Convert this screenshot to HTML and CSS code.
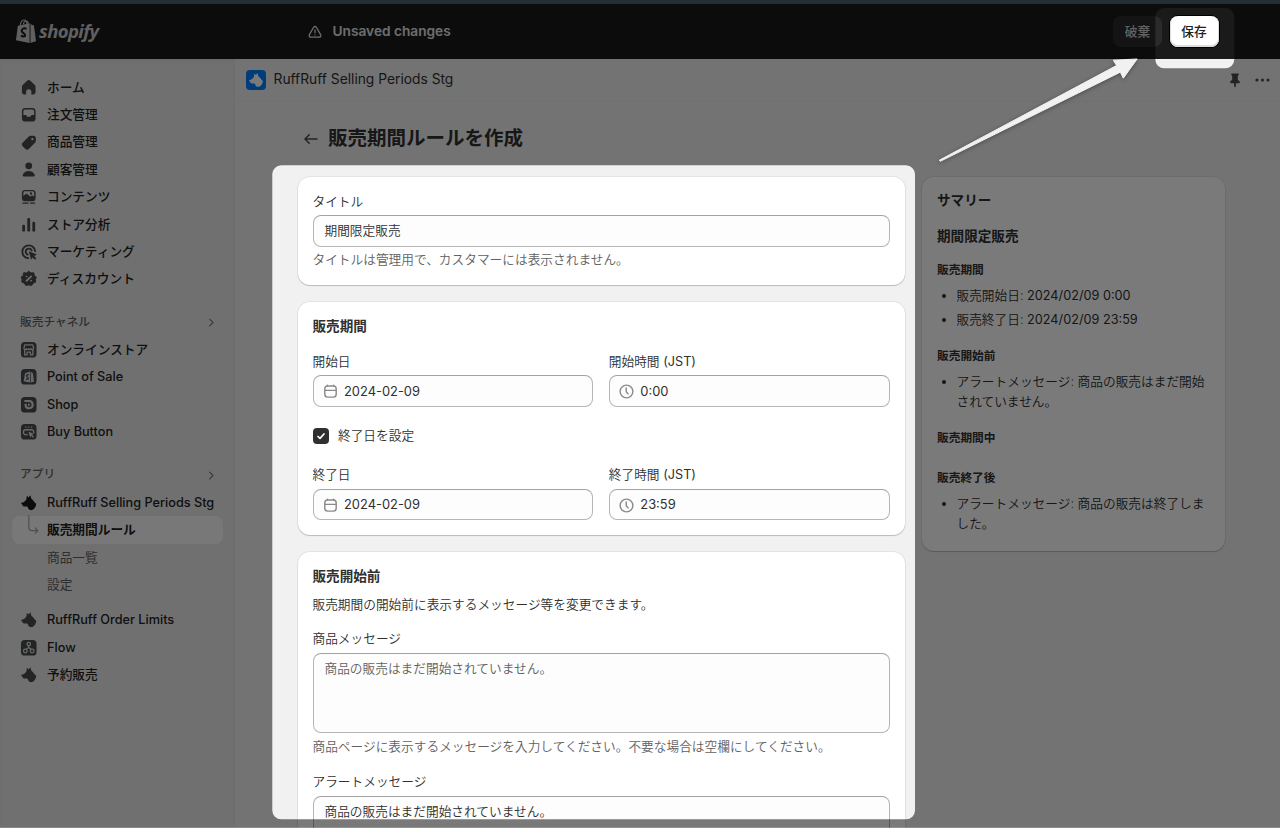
FILE: index.html
```html
<!DOCTYPE html>
<html lang="ja">
<head>
    <meta charset="UTF-8">
    <meta name="viewport" content="width=device-width, initial-scale=1.0">
    <title>販売期間ルールを作成</title>
    <link rel="stylesheet" href="styles.css">
</head>
<body>
    <!-- Shared icons -->
    <svg class="sprite">
        <symbol id="dog" viewBox="0 0 20 20">
            <path d="M7.600 6.300 8.100 2.700 9.800 4.500 11.700 2.300 12.700 5.800C14.600 7 15.300 9 17.700 11.100 17.500 14 16 16.300 13.700 17.400 11.700 17.900 9.800 17.300 9.400 15.700 9.200 14.300 8.600 13.700 7.200 13.800 5.300 14 3.900 13.600 3.500 12.500L3.700 12 2.300 11.300 2.500 10C4.600 9.600 6.300 8.700 7.600 6.300Z"/>
        </symbol>
        <symbol id="chevron" viewBox="0 0 20 20">
            <path d="m7.500 5.500 4.500 4.500-4.500 4.500" fill="none" stroke="currentColor" stroke-width="1.500" stroke-linecap="round" stroke-linejoin="round"/>
        </symbol>
        <symbol id="calendar" viewBox="0 0 20 20">
            <g fill="none" stroke="currentColor" stroke-width="1.500" stroke-linecap="round">
                <rect x="4" y="4.200" width="12" height="11.700" rx="3"/>
                <path d="M4 8.800h12M6.700 3.300v.8M13.300 3.300v.8"/>
            </g>
        </symbol>
        <symbol id="clock" viewBox="0 0 20 20">
            <g fill="none" stroke="currentColor" stroke-width="1.500" stroke-linecap="round" stroke-linejoin="round">
                <circle cx="10" cy="10" r="6.700"/>
                <path d="M9.700 6.300v3.900l2 2.300"/>
            </g>
        </symbol>
        <symbol id="bag" viewBox="0 0 22 25">
            <path d="M5.600 6.200C6 3 8 1 10 1c1.500 0 2.300 1.500 2.600 4.500M8.700 5.600C9 3.500 10.500 2 11.700 2c1.200-.1 2 1.200 2.400 2.900" fill="none" stroke="currentColor" stroke-width="1.200"/>
            <path d="M3 7l12.300-2.500V25L1 22.300z" fill="currentColor"/>
            <path d="M16.200 4.700l1.600 1.500 2 .3L22 23.300 16.200 25z" fill="currentColor"/>
            <path class="bag-s" d="M12 10.300c-2.500-1.300-5-.2-5 1.900 0 2.500 3.600 2.500 3.600 4.700 0 1.800-2.400 1.700-4.400.4" fill="none" stroke-width="2.100"/>
        </symbol>
    </svg>

    <div class="browser-edge"></div>
    <header class="topbar">
        <div class="logo">
            <svg class="logo-bag"><use href="#bag"/></svg>
            <span class="logo-text">shopify</span>
        </div>
        <div class="save-bar">
            <svg class="warning" viewBox="0 0 20 20" fill="none" stroke="currentColor" stroke-width="1.600" stroke-linecap="round" stroke-linejoin="round">
                <path d="M8.300 4.100 3 13.300c-.8 1.500 0 3.200 1.800 3.200h10.400c1.800 0 2.600-1.700 1.800-3.200L11.700 4.100c-.8-1.300-2.600-1.300-3.400 0Z"/>
                <path d="M10 7.500v3.300M10 13.600v.1"/>
            </svg>
            <span>Unsaved changes</span>
        </div>
        <button class="btn btn-discard">破棄</button>
        <button class="btn btn-save">保存</button>
    </header>

    <div class="layout">
        <nav class="sidebar">
            <ul class="nav-list">
                <li class="nav-item">
                    <svg class="icon" viewBox="0 0 20 20"><path d="M8.300 2.900a2.500 2.500 0 0 1 3.400 0l4.300 3.900c.6.500 1 1.300 1 2.200v5.300c0 1.500-1 2.500-2.400 2.500h-1.900v-2.600a2.700 2.700 0 0 0-5.400 0v2.600H5.400C4 16.800 3 15.800 3 14.300V9c0-.9.4-1.700 1-2.200z"/></svg>
                    ホーム
                </li>
                <li class="nav-item">
                    <svg class="icon" viewBox="0 0 20 20"><path fill-rule="evenodd" d="M6.500 3h7A3.500 3.500 0 0 1 17 6.500v7a3.500 3.500 0 0 1-3.500 3.500h-7A3.500 3.500 0 0 1 3 13.500v-7A3.500 3.500 0 0 1 6.500 3Zm0 1.500a2 2 0 0 0-2 2v3.700h2.300c.9 0 1.100 1.800 2.200 1.800h2c1.100 0 1.300-1.800 2.200-1.800h2.300V6.500a2 2 0 0 0-2-2z"/></svg>
                    注文管理
                </li>
                <li class="nav-item">
                    <svg class="icon" viewBox="0 0 20 20"><path fill-rule="evenodd" d="M10.300 3.400c.5-.5 1.100-.7 1.800-.7h2.700c1.500 0 2.500 1 2.500 2.500v2.700c0 .7-.2 1.300-.7 1.800l-6.500 6.700c-1 1-2.500 1-3.500 0l-2.900-2.900c-1-1-1-2.500 0-3.500zM13.700 5a1.200 1.200 0 1 0 0 2.400 1.200 1.200 0 0 0 0-2.400Z"/></svg>
                    商品管理
                </li>
                <li class="nav-item">
                    <svg class="icon" viewBox="0 0 20 20"><circle cx="10" cy="6" r="3.500"/><path d="M3.800 15.300c1-2.400 3.300-4 6.200-4s5.200 1.600 6.200 4c.3.800-.3 1.500-1 1.500H4.800c-.7 0-1.300-.7-1-1.500Z"/></svg>
                    顧客管理
                </li>
                <li class="nav-item">
                    <svg class="icon" viewBox="0 0 20 20"><path fill-rule="evenodd" d="M6 3h8a3 3 0 0 1 3 3v5.500a3 3 0 0 1-3 3H6a3 3 0 0 1-3-3V6a3 3 0 0 1 3-3Zm0 1.400A1.500 1.500 0 0 0 4.500 6v3.200l2.400-1.900c.5-.4 1-.4 1.500 0l3 2.500 1.400-.9c.5-.3 1-.3 1.400 0l1.300.9V6A1.500 1.500 0 0 0 14 4.400zM12.300 5.500a1.200 1.200 0 1 1 0 2.400 1.200 1.200 0 0 1 0-2.400Z"/><path d="M3.500 15.800h6.300v1.400H3.500zM11.300 15.800h5.200v1.400h-5.200z"/></svg>
                    コンテンツ
                </li>
                <li class="nav-item">
                    <svg class="icon" viewBox="0 0 20 20"><rect x="3.300" y="10" width="2.900" height="7" rx="1.200"/><rect x="8.500" y="3" width="2.900" height="14" rx="1.200"/><rect x="13.700" y="7" width="2.900" height="10" rx="1.200"/></svg>
                    ストア分析
                </li>
                <li class="nav-item">
                    <svg class="icon" viewBox="0 0 20 20"><path d="M9.500 16.600A6.600 6.600 0 1 1 16.600 9.500M8.800 12.900A3.200 3.200 0 1 1 13 8.700" fill="none" stroke="currentColor" stroke-width="1.900" stroke-linecap="round"/><path d="m10 9.500 8.500 3.400-3 1.500 2.400 2.400-1.500 1.500-2.500-2.500-1.400 2.500z"/></svg>
                    マーケティング
                </li>
                <li class="nav-item">
                    <svg class="icon" viewBox="0 0 20 20"><path d="M10 2.300 12.200 4 15.200 3.900 15.700 6.700 17.800 8.400 16.900 10.700 17.100 13.400 14.600 14.500 13 16.800 10 16.300 7 16.800 5.400 14.500 2.900 13.400 3.100 10.700 2.200 8.400 4.300 6.700 4.800 3.900 7.800 4Z" stroke="currentColor" stroke-linejoin="round"/><path d="m7.700 12.200 4.700-4.700M7.700 7.700h.1M12.300 12h.1" stroke="#ebebeb" stroke-width="1.700" stroke-linecap="round"/></svg>
                    ディスカウント
                </li>
            </ul>

            <div class="nav-heading">販売チャネル<svg class="chevron"><use href="#chevron"/></svg></div>
            <ul class="nav-list">
                <li class="nav-item">
                    <svg class="icon channel" viewBox="0 0 20 20"><rect x="2" y="2" width="16" height="16" rx="4"/><g fill="none" stroke="#dcdcdc" stroke-width="1.300"><path d="M6 5h8l1 3.300c0 2-2.500 2-2.500.2 0 1.800-2.500 1.800-2.500 0 0 1.800-2.500 1.800-2.500 0C7.500 10.300 5 10.300 5 8.300zM5.800 10v5.200h2.500v-2.700h3.400v2.700h2.500V10"/></g></svg>
                    オンラインストア
                </li>
                <li class="nav-item">
                    <svg class="icon channel" viewBox="0 0 20 20"><rect x="2" y="2" width="16" height="16" rx="4"/><path d="m6.200 6.300 5.200-1.800v11.300l-6.600-1.300zM12.100 4.800l2.200 1.500 1.100 8.700-3.300.8z" fill="#dcdcdc"/><path d="M10.200 8.200c-1.400-.7-2.500 0-2.500.9 0 1.300 1.900 1.300 1.900 2.600 0 1-1.300 1-2.400.3" fill="none" stroke="#4a4d50" stroke-width="1.200"/></svg>
                    Point of Sale
                </li>
                <li class="nav-item">
                    <svg class="icon channel" viewBox="0 0 20 20"><rect x="2" y="2" width="16" height="16" rx="4"/><path d="M5.500 6.200h5a3.700 3.700 0 1 1-3.700 4.700V9" fill="none" stroke="#dcdcdc" stroke-width="2.200"/><path d="M9.200 8.400v3.200l2.700-1.600z" fill="#dcdcdc"/></svg>
                    Shop
                </li>
                <li class="nav-item">
                    <svg class="icon channel" viewBox="0 0 20 20"><rect x="2" y="2" width="16" height="16" rx="4"/><path d="M9 13H7a2.500 2.500 0 0 1 0-5h6a2.500 2.500 0 0 1 2 3.500M6.500 5.300h1.200M9.400 5.300h1.200M12.300 5.300h1.200" fill="none" stroke="#dcdcdc" stroke-width="1.400"/><path d="m9.700 9.900 5.800 2.200-2.100 1 1.900 2-1 1-1.900-2-1 1.700z" fill="#dcdcdc"/></svg>
                    Buy Button
                </li>
            </ul>

            <div class="nav-heading">アプリ<svg class="chevron"><use href="#chevron"/></svg></div>
            <ul class="nav-list">
                <li class="nav-item"><svg class="icon dog-active"><use href="#dog"/></svg>RuffRuff Selling Periods Stg</li>
                <li class="nav-item selected">
                    <svg class="branch" viewBox="0 0 14 24" fill="none" stroke="currentColor" stroke-width="1.400" stroke-linecap="round" stroke-linejoin="round"><path d="M1 1v14c0 2.500 1 3.500 3.500 3.500H11M8.500 15.500l3 3-3 3"/></svg>
                    販売期間ルール
                </li>
                <li class="nav-item sub">商品一覧</li>
                <li class="nav-item sub">設定</li>
            </ul>
            <ul class="nav-list more-apps">
                <li class="nav-item"><svg class="icon channel"><use href="#dog"/></svg>RuffRuff Order Limits</li>
                <li class="nav-item">
                    <svg class="icon channel" viewBox="0 0 20 20"><rect x="2" y="2" width="16" height="16" rx="4"/><g fill="none" stroke="#dcdcdc" stroke-width="1.300"><circle cx="10" cy="6.200" r="1.800"/><circle cx="6.500" cy="13.300" r="1.900"/><circle cx="13.500" cy="13.300" r="1.900"/><path d="M10 8v1.500c0 1.500-2.500.5-2.700 2.200M10 9.500c0 1.500 2 .8 2.400 2.200"/></g></svg>
                    Flow
                </li>
                <li class="nav-item"><svg class="icon channel"><use href="#dog"/></svg>予約販売</li>
            </ul>
        </nav>

        <main class="main">
            <div class="app-header">
                <span class="app-icon"><svg><use href="#dog"/></svg></span>
                <span class="app-name">RuffRuff Selling Periods Stg</span>
                <svg class="pin" viewBox="0 0 12 16"><path d="M3 .5h6c.8 0 1 .5 1 1.200 0 .8-.6 1.100-1 1.500v4l1.800 1.600c.6.600.5 2-.5 2H7v3l-1 1.700-1-1.700v-3H1.700c-1 0-1.100-1.400-.5-2L3 7.200v-4c-.4-.4-1-.7-1-1.500C2 1 2.200.5 3 .5Z"/></svg>
                <svg class="dots" viewBox="0 0 16 4"><circle cx="2" cy="2" r="1.600"/><circle cx="7.700" cy="2" r="1.600"/><circle cx="13.400" cy="2" r="1.600"/></svg>
            </div>

            <div class="page">
                <div class="page-title">
                    <svg class="back" viewBox="0 0 14 12" fill="none" stroke="currentColor" stroke-width="1.500" stroke-linecap="round" stroke-linejoin="round"><path d="M13 6H1.200M5.200 1.800 1 6l4.200 4.200"/></svg>
                    <h1>販売期間ルールを作成</h1>
                </div>

                <div class="columns">
                    <div class="form">
                        <section class="card">
                            <label class="label">タイトル</label>
                            <div class="input">期間限定販売</div>
                            <p class="help">タイトルは管理用で、カスタマーには表示されません。</p>
                        </section>

                        <section class="card">
                            <h2>販売期間</h2>
                            <div class="field-row">
                                <div class="field">
                                    <label class="label">開始日</label>
                                    <div class="input with-icon"><svg><use href="#calendar"/></svg>2024-02-09</div>
                                </div>
                                <div class="field">
                                    <label class="label">開始時間 <span class="zone">(JST)</span></label>
                                    <div class="input with-icon"><svg><use href="#clock"/></svg>0:00</div>
                                </div>
                            </div>
                            <div class="check-row">
                                <span class="checkbox">
                                    <svg viewBox="0 0 16 16" fill="none" stroke="#fff" stroke-width="1.700" stroke-linecap="round" stroke-linejoin="round"><path d="m5 8.500 2 1.900L11 6"/></svg>
                                </span>
                                終了日を設定
                            </div>
                            <div class="field-row">
                                <div class="field">
                                    <label class="label">終了日</label>
                                    <div class="input with-icon"><svg><use href="#calendar"/></svg>2024-02-09</div>
                                </div>
                                <div class="field">
                                    <label class="label">終了時間 <span class="zone">(JST)</span></label>
                                    <div class="input with-icon"><svg><use href="#clock"/></svg>23:59</div>
                                </div>
                            </div>
                        </section>

                        <section class="card">
                            <h2>販売開始前</h2>
                            <p class="lead">販売期間の開始前に表示するメッセージ等を変更できます。</p>
                            <label class="label">商品メッセージ</label>
                            <div class="input textarea placeholder">商品の販売はまだ開始されていません。</div>
                            <p class="help">商品ページに表示するメッセージを入力してください。不要な場合は空欄にしてください。</p>
                            <label class="label next-label">アラートメッセージ</label>
                            <div class="input textarea">商品の販売はまだ開始されていません。</div>
                        </section>
                    </div>

                    <aside class="card summary">
                        <h2>サマリー</h2>
                        <h2>期間限定販売</h2>
                        <h3>販売期間</h3>
                        <ul>
                            <li>販売開始日: <span class="date">2024/02/09 0:00</span></li>
                            <li>販売終了日: <span class="date">2024/02/09 23:59</span></li>
                        </ul>
                        <h3>販売開始前</h3>
                        <ul>
                            <li>アラートメッセージ: 商品の販売はまだ開始されていません。</li>
                        </ul>
                        <h3>販売期間中</h3>
                        <ul class="empty"></ul>
                        <h3>販売終了後</h3>
                        <ul>
                            <li>アラートメッセージ: 商品の販売は終了しました。</li>
                        </ul>
                    </aside>
                </div>
            </div>
        </main>
    </div>

    <!-- Dim layer with two spotlights and the pointer arrow -->
    <svg class="overlay" viewBox="0 0 1280 828">
        <mask id="spotlight">
            <rect width="1280" height="828" fill="#fff"/>
            <rect x="272.300" y="165.300" width="642.700" height="654" rx="9" fill="#000"/>
            <rect x="1155.300" y="8" width="79" height="60.300" rx="9" fill="#000"/>
        </mask>
        <rect width="1280" height="827" fill="#000" fill-opacity=".52" mask="url(#spotlight)"/>
        <rect y="827" width="1280" height="1" fill="#000" fill-opacity=".42"/>
        <path class="arrow" d="M939.300 160.200 1116.500 65.500 1113.300 60.200 1137.200 59 1123.300 78.200 1120.300 72.200 940.300 161.300Z"/>
    </svg>
</body>
</html>
```
FILE: styles.css
```css
:root {
    --bg: #f1f1f1;
    --sidebar: #ebebeb;
    --topbar: #1a1a1a;
    --text: #303030;
    --text-secondary: #616161;
    --cjk: "Noto Sans CJK JP";
}

* {
    margin: 0;
    padding: 0;
    box-sizing: border-box;
}

body {
    height: 828px;
    overflow: hidden;
    font-family: Inter, var(--cjk), sans-serif;
    font-size: 12.7px;
    line-height: 19.6px;
    color: var(--text);
    background: var(--bg);
}

ul {
    list-style: none;
}

.sprite {
    display: none;
}

/* Top bar */
.browser-edge {
    height: 4px;
    background: #49636f;
}

.topbar {
    display: flex;
    align-items: center;
    height: 54.5px;
    padding: 0 61.5px 0 15px;
    background: var(--topbar);
    color: #e3e3e3;
}

.logo {
    display: flex;
    align-items: center;
    gap: 3px;
    width: 292px;
}

.logo-bag {
    width: 21px;
    height: 24px;
    color: #c8c8c8;
}

.bag-s {
    stroke: var(--topbar);
}

.logo-text {
    font-family: "Open Sans", sans-serif;
    font-size: 18.5px;
    font-weight: 700;
    font-style: italic;
    letter-spacing: -0.6px;
    color: #c8c8c8;
}

.save-bar {
    display: flex;
    align-items: center;
    gap: 9.5px;
    flex: 1;
    padding-top: 1px;
    font-size: 13.7px;
    font-weight: 600;
}

.warning {
    width: 16px;
    height: 16px;
}

.btn {
    height: 31px;
    padding-bottom: 2.5px;
    border: 0;
    border-radius: 8px;
    font-family: inherit;
    font-size: 12.7px;
    font-weight: 500;
}

.btn-discard {
    width: 49px;
    margin-right: 7.5px;
    background: #2b2b2b;
    color: #d0d0d0;
}

.btn-save {
    width: 49px;
    background: #fff;
    color: #202020;
    box-shadow: 0 0 0 1px #000, inset 0 -1px 0 1px #ddd;
}

.layout {
    display: flex;
    height: 769.5px;
    overflow: hidden;
}

/* Sidebar */
.sidebar {
    width: 235px;
    padding: 15.3px 12px 0;
    background: var(--sidebar);
    box-shadow: inset 0 2px 3px rgb(0 0 0 / 0.06);
}

.nav-item {
    display: flex;
    align-items: center;
    gap: 8.5px;
    height: 27.4px;
    padding-left: 7px;
    border-radius: 8px;
    font-weight: 500;
    white-space: nowrap;
    color: #222;
}

.icon {
    flex: none;
    width: 19.5px;
    height: 19.5px;
    fill: #4a4a4a;
    color: #4a4a4a;
}

.channel {
    fill: #4a4d50;
}

.dog-active {
    fill: #1a1a1a;
}

.nav-heading {
    display: flex;
    align-items: center;
    justify-content: space-between;
    height: 27.4px;
    margin-top: 15.8px;
    padding: 0 4px 0 8px;
    font-size: 11.7px;
    font-weight: 500;
    color: var(--text-secondary);
}

.chevron {
    width: 15px;
    height: 15px;
    color: #7a7a7a;
}

.nav-item.selected {
    gap: 7px;
    padding-left: 16px;
    background: #fafafa;
    font-weight: 600;
}

.branch {
    width: 12px;
    height: 22px;
    margin-top: -10px;
    color: #a5a5a5;
}

.nav-item.sub {
    padding-left: 35px;
    font-weight: 400;
    color: #616161;
}

.more-apps {
    margin-top: 7.8px;
}

/* Main area */
.main {
    flex: 1;
}

.app-header {
    display: flex;
    align-items: center;
    height: 43px;
    padding: 1px 10px 0 11px;
    border-bottom: 1px solid #ebebeb;
    font-size: 13.8px;
}

.app-icon {
    display: flex;
    align-items: center;
    justify-content: center;
    width: 20px;
    height: 20px;
    margin-right: 8px;
    border-radius: 4px;
    background: #007bff;
}

.app-icon svg {
    width: 18px;
    height: 18px;
    fill: #fff;
}

.app-name {
    flex: 1;
}

.pin {
    width: 12px;
    height: 15px;
    margin-right: 14px;
    fill: #4a4a4a;
}

.dots {
    width: 15.5px;
    height: 4px;
    fill: #4a4a4a;
}

.page {
    padding: 21.7px 55px 0 63px;
}

.page-title {
    display: flex;
    align-items: center;
    gap: 10.5px;
    height: 32px;
    margin-bottom: 21.5px;
    padding-left: 6px;
}

.page-title h1 {
    font-size: 19.5px;
    font-weight: 600;
}

.back {
    width: 14px;
    height: 12px;
    color: #4a4a4a;
}

.columns {
    display: flex;
    align-items: flex-start;
    gap: 17.5px;
}

.form {
    display: flex;
    flex-direction: column;
    gap: 16.6px;
    width: 607px;
}

.card {
    padding: 15px;
    border-radius: 12px;
    background: #fff;
    box-shadow: 0 1px 1px rgb(0 0 0 / 0.18), 0 0 0 1px rgb(0 0 0 / 0.05);
}

.card h2 {
    padding-top: 0.3px;
    font-size: 13.6px;
    font-weight: 600;
    line-height: 19.6px;
}

/* Form controls */
.label,
.input,
.help,
.lead,
.check-row,
.summary li {
    font-weight: 350;
}

.zone,
.date {
    font-weight: 400;
}

.label {
    display: block;
    margin-bottom: 3.9px;
}

.input {
    height: 31.4px;
    padding: 5px 11px;
    border: 1px solid #b5b5b5;
    border-top-color: #a3a3a3;
    border-radius: 8px;
    background: #fdfdfd;
}

.input.with-icon {
    display: flex;
    align-items: center;
    gap: 4.5px;
    padding: 1px 7px 0;
    font-size: 12.9px;
    font-weight: 400;
}

.with-icon svg {
    width: 19px;
    height: 19px;
    color: #8a8a8a;
}

.help {
    margin-top: 3.9px;
    color: var(--text-secondary);
}

.field-row {
    display: flex;
    gap: 15.6px;
    margin-top: 15.4px;
}

.field {
    flex: 1;
}

.check-row {
    display: flex;
    align-items: center;
    gap: 9px;
    margin: 19.4px 0 19.6px;
}

.check-row + .field-row {
    margin-top: 0;
}

.checkbox {
    width: 16px;
    height: 16px;
    margin-left: 0.5px;
    border-radius: 4px;
    background: #303030;
}

.checkbox svg {
    display: block;
}

.lead {
    margin: 7.8px 0 15.2px;
}

.textarea {
    height: 80.5px;
}

.placeholder {
    color: var(--text-secondary);
}

.next-label {
    margin-top: 15.4px;
}

/* Summary */
.summary {
    width: 303px;
    padding: 14.6px 15px 18px;
}

.summary h2 {
    padding-top: 0;
    margin-bottom: 15.9px;
}

.summary h3 {
    padding-top: 1px;
    margin-bottom: 7.4px;
    font-size: 11.7px;
    font-weight: 600;
    line-height: 15.7px;
}

.summary ul {
    margin-bottom: 18.8px;
    padding-left: 19.5px;
    list-style: disc;
}

.summary li + li {
    margin-top: 3.9px;
}

.summary ul.empty {
    margin-bottom: 23px;
}

.summary ul:last-child {
    margin-bottom: 0;
}

.overlay {
    position: absolute;
    top: 0;
    left: 0;
    width: 1280px;
    height: 828px;
    pointer-events: none;
}

.arrow {
    fill: #f1f1f1;
    stroke: #f1f1f1;
    stroke-width: 1;
    stroke-linejoin: round;
    filter: drop-shadow(0 1px 2px rgb(0 0 0 / 0.35));
}
```
